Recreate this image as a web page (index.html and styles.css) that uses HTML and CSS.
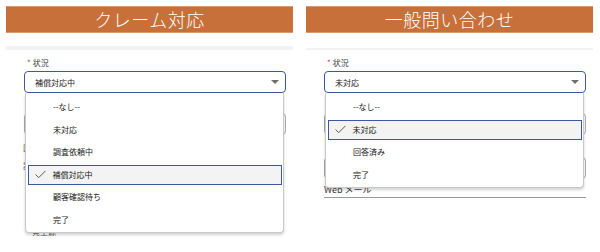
FILE: index.html
```html
<!DOCTYPE html>
<html lang="ja">
<head>
    <meta charset="UTF-8">
    <meta name="viewport" content="width=device-width, initial-scale=1.0">
    <title>状況ピックリスト</title>
    <link rel="stylesheet" href="styles.css">
</head>
<body>
    <div class="panels">
        <section class="panel">
            <h2 class="panel-title">クレーム対応</h2>
            <div class="divider"></div>
            <div class="form">
                <div class="field">
                    <div class="field-label"><span class="required">*</span>状況</div>
                    <div class="picklist">
                        <div class="picklist-input">補償対応中<span class="caret"></span></div>
                        <ul class="picklist-menu">
                            <li>--なし--</li>
                            <li>未対応</li>
                            <li>調査依頼中</li>
                            <li class="selected"><svg class="check" viewBox="0 0 12 10"><polyline points="0.5,5 4,8.5 11.5,1"/></svg>補償対応中</li>
                            <li>顧客確認待ち</li>
                            <li>完了</li>
                        </ul>
                    </div>
                </div>
                <div class="bg-input"></div>
                <div class="bg-label">区分</div>
                <div class="bg-link">詳細</div>
                <div class="bg-label bg-bottom">発生源</div>
            </div>
        </section>

        <section class="panel">
            <h2 class="panel-title">一般問い合わせ</h2>
            <div class="divider thin"></div>
            <div class="form">
                <div class="field">
                    <div class="field-label"><span class="required">*</span>状況</div>
                    <div class="picklist">
                        <div class="picklist-input">未対応<span class="caret"></span></div>
                        <ul class="picklist-menu">
                            <li>--なし--</li>
                            <li class="selected"><svg class="check" viewBox="0 0 12 10"><polyline points="0.5,5 4,8.5 11.5,1"/></svg>未対応</li>
                            <li>回答済み</li>
                            <li>完了</li>
                        </ul>
                    </div>
                </div>
                <div class="bg-input"></div>
                <div class="bg-input second"></div>
                <div class="bg-text">Web メール</div>
            </div>
        </section>
    </div>
</body>
</html>
```

FILE: styles.css
```css
body {
    margin: 0;
    background: #fff;
    font-family: "Noto Sans CJK JP", "Noto Sans", sans-serif;
    color: #3e3e3c;
}
.panels {
    display: flex;
    gap: 13px;
    padding: 6px;
}
.panel {
    width: 287px;
}
.panel-title {
    margin: 0;
    height: 25px;
    line-height: 25px;
    background: #c8703a;
    border-top: 1px solid #dc9a6c;
    border-bottom: 1px solid #dc9a6c;
    color: #fff;
    font-size: 18px;
    font-weight: 300;
    text-align: center;
    letter-spacing: 0.5px;
}
.divider {
    margin-top: 13px;
    height: 4px;
    background: #f3f3f3;
}
.divider.thin {
    margin-top: 15px;
    height: 2px;
}
.form {
    padding: 0 7px 0 18px;
}
.field-label {
    margin-top: 6px;
    height: 13px;
    line-height: 13px;
    font-size: 8px;
    margin-bottom: 2px;
    padding-left: 3px;
}
.required {
    color: #c23934;
    margin-right: 2px;
}
.picklist {
    position: relative;
}
.picklist-input {
    display: flex;
    align-items: center;
    justify-content: space-between;
    height: 22px;
    box-sizing: border-box;
    padding: 0 6px 0 10px;
    border: 1.5px solid #3a5aa0;
    border-radius: 4px;
    font-size: 8px;
    color: #181818;
    background: #fff;
}
.caret {
    width: 0;
    height: 0;
    border-left: 4px solid transparent;
    border-right: 4px solid transparent;
    border-top: 4px solid #706e6b;
}
.picklist-menu {
    position: absolute;
    top: 100%;
    left: 1px;
    right: 2px;
    z-index: 2;
    margin: 0;
    padding: 4px 1px 2px 2px;
    list-style: none;
    display: flex;
    flex-direction: column;
    gap: 2.6px;
    background: #fff;
    border: 1px solid #c9c9c9;
    border-top: none;
    border-radius: 0 0 4px 4px;
    box-shadow: 0 2px 3px rgba(0, 0, 0, 0.18);
}
.picklist-menu li {
    position: relative;
    height: 20px;
    line-height: 20px;
    box-sizing: border-box;
    padding-left: 25px;
    font-size: 8px;
    color: #181818;
}
.picklist-menu li.selected {
    background: #f3f3f3;
    border: 1.5px solid #3a5aa0;
    line-height: 17px;
    padding-left: 23.5px;
}
.check {
    position: absolute;
    left: 6px;
    top: 4px;
    width: 11px;
    height: 9px;
    fill: none;
    stroke: #555;
    stroke-width: 1.1;
}
.bg-input {
    margin-top: 20px;
    height: 20px;
    border: 1px solid #aaa;
    border-radius: 4px;
}
.bg-input.second {
    margin-top: 22px;
}
.bg-label {
    margin-top: 8px;
    margin-left: -1px;
    font-size: 8px;
    line-height: 10px;
    color: #555;
}
.bg-link {
    margin-top: 8px;
    margin-left: -1px;
    font-size: 8px;
    line-height: 10px;
    color: #3a5aa0;
}
.bg-bottom {
    margin-top: 56px;
    margin-left: 8px;
}
.bg-text {
    margin-top: 5px;
    padding-bottom: 1px;
    font-size: 9px;
    line-height: 12px;
    color: #3e3e3c;
    border-bottom: 1px solid #9a9a9a;
}
```
